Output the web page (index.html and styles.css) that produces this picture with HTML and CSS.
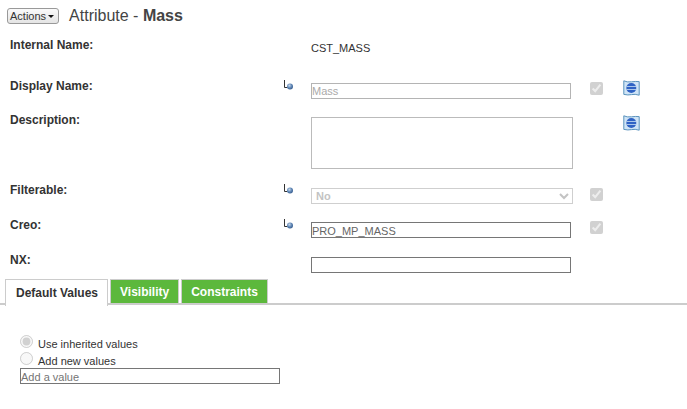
FILE: index.html
```html
<!DOCTYPE html>
<html lang="en">

<head>
	<meta charset="UTF-8">
	<title>Attribute - Mass</title>
	<link rel="stylesheet" href="styles.css">
</head>

<body>
	<svg class="icon-defs" width="0" height="0">
		<defs>
			<radialGradient id="ball" cx="0.4" cy="0.35" r="0.7">
				<stop offset="0" stop-color="#c4d6ea"/>
				<stop offset="0.55" stop-color="#5f86b5"/>
				<stop offset="1" stop-color="#34598a"/>
			</radialGradient>
			<symbol id="inherit" viewBox="0 0 12 10">
				<path d="M0.5 0V7.5H3.5" fill="none" stroke="#333" stroke-width="1"/>
				<circle cx="6" cy="6.5" r="3" fill="url(#ball)"/>
			</symbol>
			<symbol id="globe" viewBox="0 0 17 16">
				<path d="M0.8 0.8Q4 2.4 8.5 1.8T16.2 1.6V15.2Q12 13.8 8.5 14.6T0.8 14.4Z" fill="#cfe4f6" stroke="#5b93bd"/>
				<circle cx="8.3" cy="8" r="5" fill="#2f62c4"/>
				<path d="M3.4 6.5H13.2M3.4 9.5H13.2" stroke="#a9c6ea" stroke-width="1"/>
			</symbol>
		</defs>
	</svg>

	<div class="title-bar">
		<button class="actions-btn">Actions<span class="caret"></span></button>
		<h1 class="page-title">Attribute - <b>Mass</b></h1>
	</div>

	<div class="form-grid">
		<label class="field-label">Internal Name:</label>
		<span></span>
		<div class="static-value">CST_MASS</div>
		<span></span>
		<span></span>

		<label class="field-label">Display Name:</label>
		<svg class="inherit-icon"><use href="#inherit"/></svg>
		<input class="text-input" type="text" value="Mass" disabled>
		<input class="lock-check" type="checkbox" checked disabled>
		<svg class="globe-icon"><use href="#globe"/></svg>

		<label class="field-label">Description:</label>
		<span></span>
		<textarea class="text-area"></textarea>
		<span></span>
		<svg class="globe-icon desc-globe"><use href="#globe"/></svg>

		<label class="field-label">Filterable:</label>
		<svg class="inherit-icon"><use href="#inherit"/></svg>
		<select class="select-input" disabled>
			<option>No</option>
		</select>
		<input class="lock-check low" type="checkbox" checked disabled>
		<span></span>

		<label class="field-label">Creo:</label>
		<svg class="inherit-icon"><use href="#inherit"/></svg>
		<input class="text-input dark-input" type="text" value="PRO_MP_MASS" readonly>
		<input class="lock-check" type="checkbox" checked disabled>
		<span></span>

		<label class="field-label">NX:</label>
		<span></span>
		<input class="text-input dark-input" type="text">
		<span></span>
		<span></span>
	</div>

	<div class="tab-bar">
		<div class="tab active">Default Values</div>
		<div class="tab">Visibility</div>
		<div class="tab">Constraints</div>
	</div>

	<div class="values-panel">
		<label class="radio-row"><input type="radio" name="values" checked disabled>Use inherited values</label>
		<label class="radio-row"><input type="radio" name="values" disabled>Add new values</label>
		<input class="value-input" type="text" placeholder="Add a value">
	</div>
</body>
</html>
```

FILE: styles.css
```css
body {
	margin: 0;
	padding: 0;
	background-color: #fff;
	color: #333;
	font-family: "Liberation Sans", Arial, sans-serif;
	font-size: 12px;
}

.icon-defs {
	display: block;
	height: 0;
}

.title-bar {
	display: flex;
	align-items: center;
	gap: 10px;
	height: 30px;
	padding: 1px 0 0 7px;
	box-sizing: border-box;
}

.actions-btn {
	display: flex;
	align-items: center;
	height: 16px;
	padding: 0 4px 0 2px;
	border: 1px solid #999;
	border-radius: 3px;
	background: linear-gradient(#fafafa, #e4e4e4);
	color: #333;
	font-family: inherit;
	font-size: 11px;
}

.caret {
	width: 0;
	height: 0;
	margin: 2px 0 0 2px;
	border-left: 3px solid transparent;
	border-right: 3px solid transparent;
	border-top: 3px solid #111;
}

.page-title {
	margin: 0;
	color: #444;
	font-size: 16px;
	font-weight: normal;
}

.form-grid {
	display: grid;
	grid-template-columns: 274px 27px 279px 33px 1fr;
	grid-template-rows: 41px 34px 70px 35px 35px 22px;
	padding: 12px 0 0 10px;
	align-items: start;
}

.field-label {
	margin-top: -4px;
	color: #333;
	font-weight: bold;
	line-height: 14px;
}

.static-value {
	font-size: 11px;
}

.inherit-icon {
	width: 12px;
	height: 10px;
	margin-top: -3px;
}

.text-input {
	box-sizing: border-box;
	width: 260px;
	height: 16px;
	padding: 0;
	border: 1px solid #b4b4b4;
	background: #fff;
	color: #aaa;
	font-family: inherit;
	font-size: 11px;
	outline: none;
}

.dark-input {
	padding-top: 1px;
	border-color: #767676;
	color: #666;
}

.text-area {
	box-sizing: border-box;
	width: 262px;
	height: 52px;
	padding: 0;
	border: 1px solid #bbb;
	resize: none;
}

.select-input {
	box-sizing: border-box;
	width: 262px;
	height: 16px;
	margin-top: 1px;
	padding: 0;
	border: 1px solid #bbb;
	background: #fff;
	color: #aaa;
	font-family: inherit;
	font-size: 11px;
	font-weight: bold;
}

.lock-check {
	width: 13px;
	height: 13px;
	margin: -1px 0 0 0;
}

.lock-check.low {
	margin-top: 1px;
}

.globe-icon {
	width: 17px;
	height: 16px;
	margin-top: -3px;
}

.desc-globe {
	margin-top: -2px;
}

.tab-bar {
	display: flex;
	gap: 2px;
	height: 24px;
	padding-left: 5px;
	border-bottom: 2px solid #ccc;
}

.tab {
	display: flex;
	align-items: center;
	padding: 0 9px;
	border: 1px solid #ccc;
	border-bottom: none;
	background-color: #5cb83c;
	color: #fff;
	font-weight: bold;
}

.tab.active {
	height: 26px;
	padding: 0 9px 0 10px;
	background-color: #fff;
	color: #333;
}

.values-panel {
	display: flex;
	flex-direction: column;
	align-items: flex-start;
	padding: 30px 0 0 20px;
}

.radio-row {
	display: flex;
	align-items: center;
	height: 17px;
	font-size: 11px;
}

.radio-row input {
	margin: -4px 5px 0 0;
}

.value-input {
	box-sizing: border-box;
	width: 260px;
	height: 16px;
	margin-top: -1px;
	padding: 2px 0 0 0;
	border: 1px solid #767676;
	font-family: inherit;
	font-size: 11px;
	outline: none;
}
```
